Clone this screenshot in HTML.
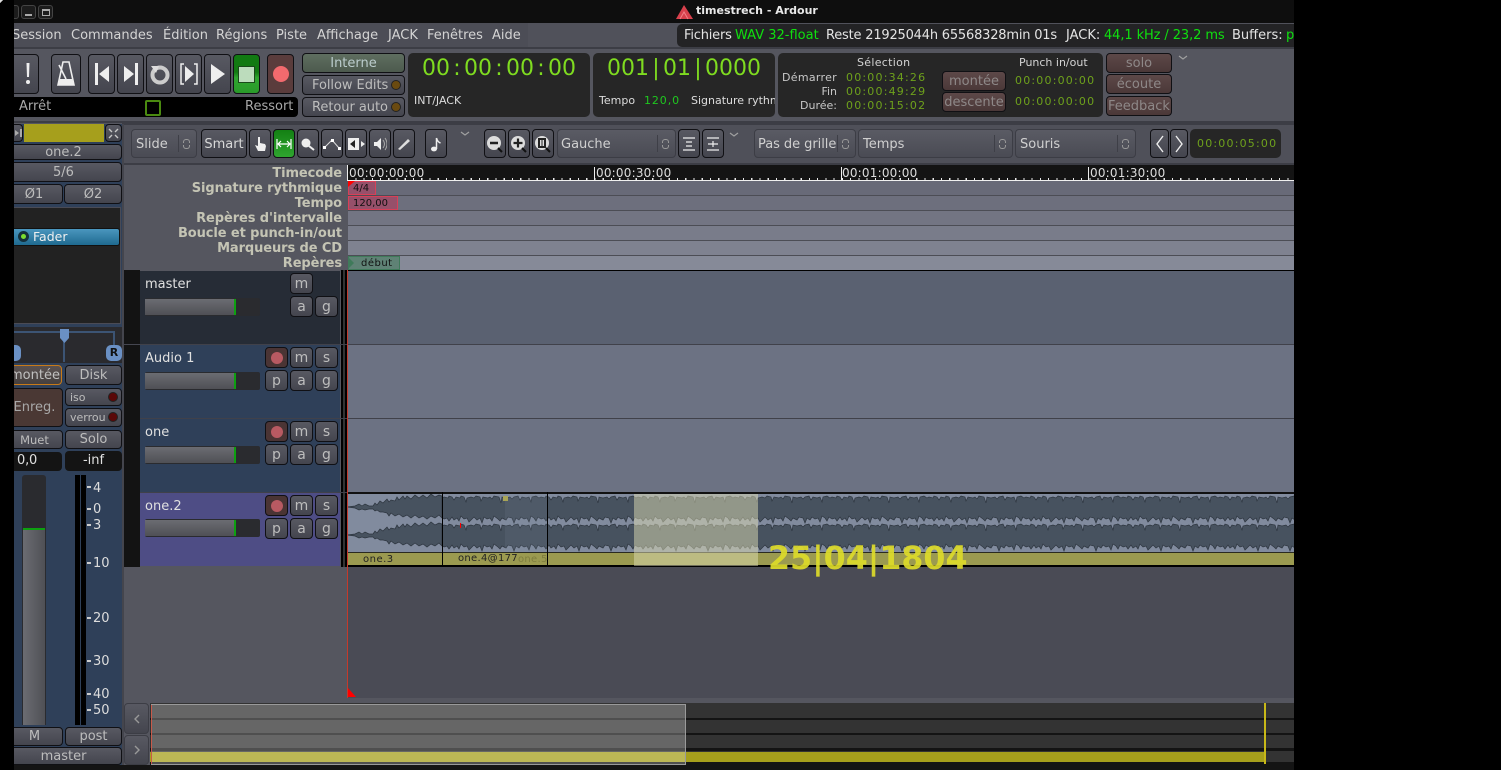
<!DOCTYPE html>
<html><head><meta charset="utf-8">
<style>
html,body{margin:0;padding:0;background:#000}
#r{position:relative;width:1501px;height:770px;overflow:hidden;background:#000;font-family:"DejaVu Sans","Liberation Sans",sans-serif;font-size:13px;color:#d4d4d4}
#p{position:absolute;left:14px;top:0;width:1280px;height:770px;overflow:hidden}
#w{position:absolute;left:-14px;top:0;width:1501px;height:770px}
.a{position:absolute;box-sizing:border-box}
.t{position:absolute;white-space:nowrap;line-height:16px}
.mn{line-height:19px;top:26px}
.b{position:absolute;box-sizing:border-box;border:1px solid #101014;border-radius:4px;background:linear-gradient(#585962,#44454e);display:flex;align-items:center;justify-content:center;white-space:nowrap;color:#bdbdbd;overflow:hidden}
.d{position:absolute;box-sizing:border-box;border:1px solid #3c3d45;border-radius:4px;background:linear-gradient(#5a5b64,#4a4b54);line-height:29px;padding-left:4px;white-space:nowrap;color:#d0d0d0;overflow:hidden}
.d:after{content:"";position:absolute;right:17px;top:5px;height:17px;border-left:1px solid #3e3f47}
.d i{position:absolute;right:6px;top:9px;width:5px;height:3px;border:1px solid #999;border-bottom:0;border-radius:3px 3px 0 0}
.d u{position:absolute;right:6px;top:15px;width:5px;height:3px;border:1px solid #999;border-top:0;border-radius:0 0 3px 3px}
.p{position:absolute;box-sizing:border-box;background:#262626;border-radius:5px}
.g{color:#6ea11c;font-size:11px;letter-spacing:1.2px}
.l{position:absolute;right:1159px;font-weight:bold;color:#c4c4b4;line-height:15px;white-space:nowrap;letter-spacing:-.1px;font-size:13px}
.tn{position:absolute;left:140px;width:200px;height:73px}
.tb{border-radius:4px;width:23px;height:21px;font-size:14px}
.fd{position:absolute;left:145px;width:115px;height:18px;background:#2a2b2f;border-radius:2px}
.fd b{position:absolute;left:0;top:1px;width:89px;height:16px;background:linear-gradient(#6b6c72,#4f5055)}
.fd s{position:absolute;left:89px;top:1px;width:2px;height:16px;background:#0da010}
.rec{background:#4a3434}
.rec:after{content:"";width:12px;height:12px;border-radius:50%;background:#b85a62}
.m{background:linear-gradient(#5d4848,#4b3838);color:#8e8888}
.c{position:absolute;display:flex;font-size:22px;line-height:28px;color:#7fdc20}
.c span{display:block;width:14px;text-align:center}
svg{display:block}
</style></head><body>
<div id="r">
<div class="a" style="left:0;top:0;width:3px;height:3px;background:#ddd;clip-path:polygon(0 0,100% 0,0 100%)"></div>
<div id="p"><div id="w">

<!-- title bar -->
<div class="a" style="left:0;top:0;width:1501px;height:23px;background:#0e0e0e"></div>
<div class="a" style="left:7px;top:5px;width:12px;height:14px;border:1px solid #444;border-radius:3px;background:#1c1c1c"></div>
<div class="a" style="left:21px;top:5px;width:15px;height:14px;border:1px solid #444;border-radius:3px;background:#1c1c1c"><div class="a" style="left:3px;top:8px;width:7px;height:2px;background:#aaa"></div></div>
<div class="a" style="left:38px;top:5px;width:15px;height:14px;border:1px solid #444;border-radius:3px;background:#1c1c1c"><div class="a" style="left:3px;top:3px;width:8px;height:7px;border:1px solid #aaa;border-top-width:2px"></div></div>
<svg class="a" style="left:675px;top:4px" width="18" height="16"><path d="M9 1 L18 15 L1 15Z" fill="#d8404c"/><path d="M5 15L9 8L13 15" fill="none" stroke="#f08088" stroke-width="1"/></svg>
<div class="t" style="left:696px;top:3px;font-weight:bold;font-size:11px;color:#e8e8e8">timestrech - Ardour</div>

<!-- menu -->
<div class="a" style="left:0;top:23px;width:1501px;height:24px;background:#4c4d56"></div>
<div class="a" style="left:528px;top:23px;width:770px;height:24px;background:#50515a"></div>
<div class="t mn" style="left:12px">Session</div>
<div class="t mn" style="left:71px">Commandes</div>
<div class="t mn" style="left:163px">Édition</div>
<div class="t mn" style="left:216px">Régions</div>
<div class="t mn" style="left:276px">Piste</div>
<div class="t mn" style="left:317px">Affichage</div>
<div class="t mn" style="left:388px">JACK</div>
<div class="t mn" style="left:427px">Fenêtres</div>
<div class="t mn" style="left:492px">Aide</div>
<div class="a" style="left:677px;top:24px;width:640px;height:23px;background:#232325;border-radius:5px 0 0 5px"></div>
<div class="t mn" style="left:684px;color:#e4e4e4;letter-spacing:-.2px">Fichiers</div>
<div class="t mn" style="left:735px;color:#0fe00f">WAV 32-float</div>
<div class="t mn" style="left:826px;color:#e4e4e4;letter-spacing:-.2px">Reste 21925044h 65568328min 01s</div>
<div class="t mn" style="left:1066px;color:#e4e4e4">JACK:</div>
<div class="t mn" style="left:1104px;color:#0fe00f;letter-spacing:-.1px">44,1 kHz / 23,2 ms</div>
<div class="t mn" style="left:1232px;color:#e4e4e4">Buffers:</div>
<div class="t mn" style="left:1286px;color:#0fe00f">p</div>

<!-- transport -->
<div class="a" style="left:0;top:47px;width:1501px;height:77px;background:#55565f;border-top:2px solid #3c3d45"></div>
<div class="a" style="left:0;top:121px;width:1501px;height:2px;background:#3c3d45"></div>
<div class="b" style="left:10px;top:54px;width:29px;height:40px"><svg width="12" height="26" style="margin-left:6px"><path d="M4.500 2h3l-.5 14H5Z" fill="#eee"/><circle cx="6" cy="21" r="2" fill="#eee"/></svg></div>
<div class="b" style="left:51px;top:54px;width:30px;height:40px"><svg width="24" height="30"><path d="M9 3h6l5 23H4Z M4 26h16" fill="none" stroke="#eee" stroke-width="1.6"/><path d="M6 20h12l2 6H4Z" fill="#eee"/><path d="M12 20L5 6" stroke="#eee" stroke-width="1.6"/></svg></div>
<div class="b" style="left:88px;top:54px;width:27px;height:40px"><svg width="16" height="24"><path d="M1 1h3v22H1Z" fill="#eee"/><path d="M15 4v16L5 12Z" fill="#eee"/></svg></div>
<div class="b" style="left:117px;top:54px;width:27px;height:40px"><svg width="16" height="24"><path d="M12 1h3v22h-3Z" fill="#eee"/><path d="M1 4v16l10-8Z" fill="#eee"/></svg></div>
<div class="b" style="left:146px;top:54px;width:27px;height:40px"><svg width="22" height="22"><circle cx="11" cy="12" r="7.5" fill="none" stroke="#ccc" stroke-width="4"/><path d="M2 3l8 0-3 7Z" fill="#ddd"/></svg></div>
<div class="b" style="left:175px;top:54px;width:27px;height:40px"><svg width="20" height="24"><path d="M5 2H2v20h3M15 2h3v20h-3" fill="none" stroke="#eee" stroke-width="1.5"/><path d="M6 4v16l9-8Z" fill="#eee"/></svg></div>
<div class="b" style="left:204px;top:54px;width:27px;height:40px"><svg width="16" height="24"><path d="M1 2v20l14-10Z" fill="#eee"/></svg></div>
<div class="b" style="left:233px;top:54px;width:27px;height:40px;background:linear-gradient(#127a12 0,#127a12 45%,#2fa52f 60%,#2a9a2a)"><div style="width:15px;height:15px;background:#bcdcbc;border:1px solid #1a4a1a"></div></div>
<div class="b" style="left:267px;top:54px;width:27px;height:40px;background:#5a3c3c"><div style="width:16px;height:16px;border-radius:50%;background:#f26a6e"></div></div>
<div class="b" style="left:302px;top:53px;width:103px;height:20px;background:linear-gradient(#5f6e60,#4d5a4e);color:#bcc">Interne</div>
<div class="b" style="left:302px;top:75px;width:103px;height:20px;justify-content:flex-start;padding-left:9px;letter-spacing:-.05px">Follow Edits<div class="a" style="left:88px;top:4px;width:10px;height:10px;border-radius:50%;background:#6a4a10;border:1px solid #222"></div></div>
<div class="b" style="left:302px;top:97px;width:103px;height:20px;justify-content:flex-start;padding-left:9px;letter-spacing:-.05px">Retour auto<div class="a" style="left:88px;top:4px;width:10px;height:10px;border-radius:50%;background:#6a4a10;border:1px solid #222"></div></div>
<div class="a" style="left:0;top:97px;width:298px;height:20px;background:#000;border-radius:0 4px 4px 0"></div>
<div class="t" style="left:19px;top:99px;color:#a8a8a8">Arrêt</div>
<div class="t" style="left:245px;top:99px;color:#a8a8a8">Ressort</div>
<div class="a" style="left:145px;top:100px;width:16px;height:16px;border:2px solid #4a8a10;border-radius:2px"></div>

<!-- clocks -->
<div class="p" style="left:408px;top:53px;width:182px;height:64px"></div>
<div class="c" style="left:422px;top:55px"><span>0</span><span>0</span><span>:</span><span>0</span><span>0</span><span>:</span><span>0</span><span>0</span><span>:</span><span>0</span><span>0</span></div>
<div class="t" style="left:414px;top:93px;font-size:11px;color:#dcdcdc">INT/JACK</div>
<div class="p" style="left:593px;top:53px;width:182px;height:64px"></div>
<div class="c" style="left:607px;top:55px"><span>0</span><span>0</span><span>1</span><span>|</span><span>0</span><span>1</span><span>|</span><span>0</span><span>0</span><span>0</span><span>0</span></div>
<div class="t" style="left:599px;top:93px;font-size:11px;color:#dcdcdc">Tempo</div>
<div class="t" style="left:644px;top:93px;font-size:11px;color:#1fc81f;letter-spacing:.9px">120,0</div>
<div class="a" style="left:691px;top:93px;width:84px;height:16px;overflow:hidden"><div class="t" style="left:0;top:0;font-size:11px;color:#dcdcdc">Signature rythmique</div></div>
<div class="p" style="left:778px;top:53px;width:325px;height:64px"></div>
<div class="t" style="left:857px;top:55px;font-size:11px;color:#d4d4d4;letter-spacing:.3px">Sélection</div>
<div class="t" style="left:1019px;top:55px;font-size:11px;color:#d4d4d4">Punch in/out</div>
<div class="t" style="right:664px;top:70px;font-size:11px;color:#c8c8c8;letter-spacing:.3px">Démarrer</div>
<div class="t" style="right:664px;top:84px;font-size:11px;color:#c8c8c8">Fin</div>
<div class="t" style="right:664px;top:98px;font-size:11px;color:#c8c8c8">Durée:</div>
<div class="t g" style="left:846px;top:70px">00:00:34:26</div>
<div class="t g" style="left:846px;top:84px">00:00:49:29</div>
<div class="t g" style="left:846px;top:98px">00:00:15:02</div>
<div class="t g" style="left:1015px;top:73px">00:00:00:00</div>
<div class="t g" style="left:1015px;top:94px">00:00:00:00</div>
<div class="b m" style="left:942px;top:71px;width:64px;height:20px">montée</div>
<div class="b m" style="left:942px;top:92px;width:64px;height:20px">descente</div>
<div class="b m" style="left:1106px;top:53px;width:66px;height:20px">solo</div>
<div class="b m" style="left:1106px;top:74px;width:66px;height:20px">écoute</div>
<div class="b m" style="left:1106px;top:96px;width:66px;height:20px">Feedback</div>
<svg class="a" style="left:1178px;top:55px" width="10" height="6"><path d="M1 1l4 3 4-3" fill="none" stroke="#a0a0a0" stroke-width="1.2"/></svg>

<!-- editor toolbar -->
<div class="a" style="left:122px;top:123px;width:1180px;height:42px;background:#4f5059;border:1px solid #3c3d45;border-width:2px 0 2px 2px"></div>
<div class="d" style="left:131px;top:129px;width:66px;height:29px">Slide<i></i><u></u></div>
<div class="b" style="left:201px;top:129px;width:46px;height:29px;color:#d8d8d8;padding-top:1px">Smart</div>
<div class="b" style="left:249px;top:129px;width:22px;height:29px"><svg width="14" height="16"><path d="M5 1h2v6l5 1 1 2-1 5H5L2 9l3 1Z" fill="#eee"/></svg></div>
<div class="b" style="left:273px;top:129px;width:22px;height:29px;background:linear-gradient(#138013,#2fa52f)"><svg width="16" height="12"><path d="M1 1v10M15 1v10M2 6h12M5 3L2 6l3 3M11 3l3 3-3 3" fill="none" stroke="#fff" stroke-width="1.2"/></svg></div>
<div class="b" style="left:297px;top:129px;width:22px;height:29px"><svg width="16" height="14"><circle cx="6" cy="6" r="4.500" fill="#eee"/><path d="M9 9l5 4" stroke="#eee" stroke-width="2"/></svg></div>
<div class="b" style="left:321px;top:129px;width:22px;height:29px"><svg width="18" height="12"><path d="M2 9L9 2l7 8" fill="none" stroke="#ddd" stroke-width="1"/><rect x="0" y="8" width="3" height="3" fill="#fff"/><rect x="8" y="1" width="3" height="3" fill="#fff"/><rect x="15" y="9" width="3" height="3" fill="#fff"/></svg></div>
<div class="b" style="left:345px;top:129px;width:22px;height:29px"><svg width="18" height="14"><path d="M1 1h11v12H1Z" fill="#eee"/><path d="M3 7l5-4v8Z" fill="#222"/><path d="M14 4l4 3-4 3Z" fill="#eee"/></svg></div>
<div class="b" style="left:369px;top:129px;width:22px;height:29px"><svg width="14" height="14"><path d="M1 5h3l4-4v12l-4-4H1Z" fill="#eee"/><path d="M10 3q3 4 0 8M12 1q4 6 0 12" fill="none" stroke="#aaa"/></svg></div>
<div class="b" style="left:393px;top:129px;width:22px;height:29px"><svg width="14" height="14"><path d="M1 12L11 2l2 2L3 13Z" fill="#ddd"/></svg></div>
<div class="b" style="left:425px;top:129px;width:22px;height:29px"><svg width="12" height="16"><ellipse cx="4" cy="13" rx="3" ry="2.400" fill="#eee"/><path d="M6.500 13V2q1 4 4 5" fill="none" stroke="#eee" stroke-width="1.500"/></svg></div>
<svg class="a" style="left:460px;top:131px" width="10" height="6"><path d="M1 1l4 3 4-3" fill="none" stroke="#a0a0a0" stroke-width="1.2"/></svg>
<div class="b" style="left:484px;top:129px;width:22px;height:29px"><svg width="18" height="18"><circle cx="8" cy="8" r="7" fill="#ddd"/><path d="M4 8h8" stroke="#222" stroke-width="2.500"/><path d="M12 13l4 4" stroke="#111" stroke-width="2"/></svg></div>
<div class="b" style="left:508px;top:129px;width:22px;height:29px"><svg width="18" height="18"><circle cx="8" cy="8" r="7" fill="#ddd"/><path d="M3.500 8h9M8 3.500v9" stroke="#222" stroke-width="2.200"/><path d="M12 13l4 4" stroke="#111" stroke-width="2"/></svg></div>
<div class="b" style="left:532px;top:129px;width:22px;height:29px"><svg width="18" height="18"><circle cx="8" cy="8" r="7" fill="#ddd"/><path d="M5 4h6v8H5Z" fill="none" stroke="#222" stroke-width="2"/><path d="M8 4v8" stroke="#222"/><path d="M12 13l4 4" stroke="#111" stroke-width="2"/></svg></div>
<div class="d" style="left:557px;top:129px;width:119px;height:29px;padding-left:3px">Gauche<i></i><u></u></div>
<div class="b" style="left:678px;top:129px;width:22px;height:29px"><svg width="14" height="14"><path d="M1 1h12M1 13h12M4 5h6M4 9h6" stroke="#eee" stroke-width="1.200"/></svg></div>
<div class="b" style="left:702px;top:129px;width:22px;height:29px"><svg width="14" height="14"><path d="M1 1h12M1 13h12M2 7h10M7 4v6" stroke="#eee" stroke-width="1.200"/></svg></div>
<svg class="a" style="left:729px;top:132px" width="10" height="6"><path d="M1 1l4 3 4-3" fill="none" stroke="#a0a0a0" stroke-width="1.2"/></svg>
<div class="d" style="left:754px;top:129px;width:102px;height:29px;padding-left:3px;letter-spacing:-.05px">Pas de grille<i></i><u></u></div>
<div class="d" style="left:858px;top:129px;width:155px;height:29px">Temps<i></i><u></u></div>
<div class="d" style="left:1015px;top:129px;width:121px;height:29px">Souris<i></i><u></u></div>
<div class="b" style="left:1150px;top:129px;width:19px;height:29px"><svg width="10" height="18"><path d="M8 1L2 9l6 8" fill="none" stroke="#eee" stroke-width="1.400"/></svg></div>
<div class="b" style="left:1170px;top:129px;width:18px;height:29px"><svg width="10" height="18"><path d="M2 1l6 8-6 8" fill="none" stroke="#eee" stroke-width="1.400"/></svg></div>
<div class="p" style="left:1190px;top:129px;width:91px;height:29px"></div>
<div class="t g" style="left:1197px;top:136px">00:00:05:00</div>

<!-- ruler column -->
<div class="a" style="left:124px;top:165px;width:224px;height:535px;background:#55565f"></div>
<div class="l" style="top:166px">Timecode</div>
<div class="l" style="top:181px">Signature rythmique</div>
<div class="l" style="top:196px">Tempo</div>
<div class="l" style="top:211px">Repères d'intervalle</div>
<div class="l" style="top:226px">Boucle et punch-in/out</div>
<div class="l" style="top:241px">Marqueurs de CD</div>
<div class="l" style="top:256px">Repères</div>

<!-- rulers -->
<div class="a" style="left:347px;top:165px;width:950px;height:16px;background:#141414"></div>
<div class="a" style="left:347px;top:178px;width:950px;height:2px;background:repeating-linear-gradient(90deg,#e8e8e8 0,#e8e8e8 1px,transparent 1px,transparent 8.25px)"></div>
<div class="a" style="left:347px;top:180px;width:950px;height:1px;background:#f0f0f0"></div>
<div class="a" style="left:347px;top:165px;width:1px;height:15px;background:#eee"></div>
<div class="a" style="left:594px;top:167px;width:1px;height:13px;background:#eee"></div>
<div class="a" style="left:841px;top:167px;width:1px;height:13px;background:#eee"></div>
<div class="a" style="left:1088px;top:167px;width:1px;height:13px;background:#eee"></div>
<div class="t" style="left:349px;top:165px;font-size:12px;color:#ddd;letter-spacing:.2px">00:00:00:00</div>
<div class="t" style="left:596px;top:165px;font-size:12px;color:#ddd;letter-spacing:.2px">00:00:30:00</div>
<div class="t" style="left:842px;top:165px;font-size:12px;color:#ddd;letter-spacing:.2px">00:01:00:00</div>
<div class="t" style="left:1090px;top:165px;font-size:12px;color:#ddd;letter-spacing:.2px">00:01:30:00</div>
<div class="a" style="left:348px;top:181px;width:950px;height:14px;background:#686a78"></div>
<div class="a" style="left:348px;top:195px;width:950px;height:1px;background:#4c4d55"></div>
<div class="a" style="left:348px;top:196px;width:950px;height:14px;background:#6d6f7d"></div>
<div class="a" style="left:348px;top:210px;width:950px;height:1px;background:#4c4d55"></div>
<div class="a" style="left:348px;top:211px;width:950px;height:14px;background:#737583"></div>
<div class="a" style="left:348px;top:225px;width:950px;height:1px;background:#4c4d55"></div>
<div class="a" style="left:348px;top:226px;width:950px;height:14px;background:#797c8a"></div>
<div class="a" style="left:348px;top:240px;width:950px;height:1px;background:#4c4d55"></div>
<div class="a" style="left:348px;top:241px;width:950px;height:14px;background:#7f8290"></div>
<div class="a" style="left:348px;top:255px;width:950px;height:1px;background:#4c4d55"></div>
<div class="a" style="left:348px;top:256px;width:950px;height:14px;background:#868a98"></div>
<div class="a" style="left:348px;top:181px;width:28px;height:14px;background:#96506a;border:1px solid #d84058"></div>
<div class="a" style="left:348px;top:181px;width:0;height:0;border-top:6px solid #f00;border-right:7px solid transparent"></div>
<div class="t" style="left:353px;top:181px;font-size:10px;color:#111">4/4</div>
<div class="a" style="left:348px;top:196px;width:50px;height:14px;background:#96506a;border:1px solid #d84058"></div>
<div class="t" style="left:353px;top:196px;font-size:10px;color:#111">120,00</div>
<div class="a" style="left:348px;top:256px;width:52px;height:14px;background:#5f8275;border:1px solid #3f7a5a"></div>
<div class="a" style="left:349px;top:258px;width:0;height:0;border-left:5px solid #3f7a5a;border-top:5px solid transparent;border-bottom:5px solid transparent"></div>
<div class="t" style="left:361px;top:256px;font-size:10px;color:#111;letter-spacing:.5px">début</div>

<!-- tracks -->
<div class="a" style="left:124px;top:270px;width:16px;height:297px;background:#131313"></div>
<div class="tn" style="top:271px;background:#262c36"></div>
<div class="tn" style="top:345px;background:#2f4059"></div>
<div class="tn" style="top:419px;background:#2f4059"></div>
<div class="tn" style="top:493px;background:#4e4d85"></div>
<div class="a" style="left:124px;top:344px;width:1180px;height:1px;background:#454650"></div>
<div class="a" style="left:341px;top:270px;width:2px;height:297px;background:#000"></div>
<div class="a" style="left:345px;top:270px;width:2px;height:297px;background:#000"></div>
<div class="a" style="left:343px;top:270px;width:2px;height:297px;background:#333"></div>
<div class="a" style="left:347px;top:271px;width:950px;height:73px;background:#5a6171"></div>
<div class="a" style="left:347px;top:345px;width:950px;height:73px;background:#6c7283"></div>
<div class="a" style="left:347px;top:419px;width:950px;height:73px;background:#6c7283"></div>
<div class="a" style="left:140px;top:344px;width:1160px;height:1px;background:#40414a"></div>
<div class="a" style="left:140px;top:418px;width:1160px;height:1px;background:#40414a"></div>
<div class="a" style="left:140px;top:492px;width:1160px;height:1px;background:#40414a"></div>

<div class="t" style="left:145px;top:276px;line-height:17px;color:#e0e0e0">master</div>
<div class="t" style="left:145px;top:350px;line-height:17px;color:#e0e0e0">Audio 1</div>
<div class="t" style="left:145px;top:424px;line-height:17px;color:#e0e0e0">one</div>
<div class="t" style="left:145px;top:498px;line-height:17px;color:#e0e0e0">one.2</div>

<div class="fd" style="top:298px"><b></b><s></s></div>
<div class="fd" style="top:372px"><b></b><s></s></div>
<div class="fd" style="top:446px"><b></b><s></s></div>
<div class="fd" style="top:519px"><b></b><s></s></div>

<div class="b tb" style="left:290px;top:273px">m</div>
<div class="b tb" style="left:290px;top:296px">a</div>
<div class="b tb" style="left:315px;top:296px">g</div>

<div class="b tb rec" style="left:265px;top:347px"></div><div class="b tb" style="left:290px;top:347px">m</div><div class="b tb" style="left:315px;top:347px">s</div>
<div class="b tb" style="left:265px;top:370px">p</div><div class="b tb" style="left:290px;top:370px">a</div><div class="b tb" style="left:315px;top:370px">g</div>

<div class="b tb rec" style="left:265px;top:421px"></div><div class="b tb" style="left:290px;top:421px">m</div><div class="b tb" style="left:315px;top:421px">s</div>
<div class="b tb" style="left:265px;top:444px">p</div><div class="b tb" style="left:290px;top:444px">a</div><div class="b tb" style="left:315px;top:444px">g</div>

<div class="b tb rec" style="left:265px;top:495px"></div><div class="b tb" style="left:290px;top:495px">m</div><div class="b tb" style="left:315px;top:495px">s</div>
<div class="b tb" style="left:265px;top:518px">p</div><div class="b tb" style="left:290px;top:518px">a</div><div class="b tb" style="left:315px;top:518px">g</div>

<!-- region -->
<svg class="a" style="left:347px;top:492px" width="950" height="76">
<defs>
<g id="c">
<path d="M0,3 4,4 5,2 8,3 10,6 12,3 16,4 17,2 20,3 22,8 23,4 27,3 30,4 32,2 36,3 37,7 39,3 44,4 46,3 48,5 50,2 55,3 57,9 58,3 62,4 66,3 68,5 70,3 74,2 76,6 78,3 82,4 85,3 87,8 88,3 92,2 95,4 97,3 97,25 94,23 92,27 90,24 87,22 85,28 83,24 80,25 77,23 75,26 72,24 70,29 68,24 64,23 62,26 58,24 56,27 54,25 50,22 48,27 46,24 43,25 40,23 38,29 36,24 33,26 30,23 28,25 25,28 23,24 20,25 17,22 15,27 13,24 10,26 8,23 5,27 3,24 0,25Z" fill="#47525f"/>
<path d="M0,3 4,4 5,2 8,3 10,6 12,3 16,4 17,2 20,3 22,8 23,4 27,3 30,4 32,2 36,3 37,7 39,3 44,4 46,3 48,5 50,2 55,3 57,9 58,3 62,4 66,3 68,5 70,3 74,2 76,6 78,3 82,4 85,3 87,8 88,3 92,2 95,4 97,3M97,25 94,23 92,27 90,24 87,22 85,28 83,24 80,25 77,23 75,26 72,24 70,29 68,24 64,23 62,26 58,24 56,27 54,25 50,22 48,27 46,24 43,25 40,23 38,29 36,24 33,26 30,23 28,25 25,28 23,24 20,25 17,22 15,27 13,24 10,26 8,23 5,27 3,24 0,25" fill="none" stroke="#2c343e" stroke-width=".7"/>
</g>
<pattern id="wv" x="0" y="2" width="97" height="58" patternUnits="userSpaceOnUse"><use href="#c"/><use href="#c" y="28"/></pattern>
<path id="e" d="M0,15 8,14 12,12 15,14 18,12 22,14 26,14 28,11 30,13 33,9 36,11 40,7 42,10 44,8 48,9 50,5 52,8 56,4 58,7 60,4 64,7 68,3 72,6 76,3 80,6 84,2 88,5 92,3 95,4 95,26 92,23 88,26 84,24 80,27 76,24 72,26 68,23 64,26 60,23 56,25 52,22 48,24 44,21 42,24 40,21 36,20 33,20 30,18 28,19 26,17 22,17 18,18 15,17 12,18 8,16 0,15Z" fill="#47525f" stroke="#2c343e" stroke-width=".7"/>
</defs>
<rect x="0" y="1" width="950" height="60" fill="#818b9e"/>
<use href="#e" y="0"/><use href="#e" y="28"/>
<rect x="95" y="2" width="860" height="58" fill="url(#wv)"/>
<rect x="158" y="2" width="42" height="58" fill="#7f8b9e" opacity=".15"/>
<rect x="0" y="60" width="950" height="13" fill="#9b9a50"/>
<rect x="0" y="0" width="950" height="2" fill="#111"/>
<rect x="0" y="60" width="950" height="1" fill="#2a2a20"/>
<rect x="0" y="73" width="950" height="2" fill="#000"/>
<rect x="95" y="0" width="1" height="75" fill="#000"/>
<rect x="200" y="0" width="1" height="75" fill="#000"/>
<rect x="156" y="4" width="5" height="5" fill="#a8a456"/>
<rect x="113" y="31" width="1" height="5" fill="#f00"/>
<rect x="287" y="2" width="124" height="72" fill="#dedcb4" opacity=".5"/>
</svg>
<div class="t" style="left:363px;top:552px;font-size:10px;color:#222;letter-spacing:.5px">one.3</div>
<div class="t" style="left:458px;top:551px;font-size:10px;color:#222;letter-spacing:.3px">one.4@177</div>
<div class="t" style="left:518px;top:552px;font-size:10px;color:#7f7e3e;letter-spacing:.3px">one.5</div>

<!-- empty canvas -->
<div class="a" style="left:348px;top:567px;width:950px;height:131px;background:#4a4b55"></div>
<div class="a" style="left:347px;top:270px;width:1px;height:428px;background:#c43a2c"></div>
<div class="a" style="left:348px;top:688px;width:0;height:0;border-bottom:9px solid #f00;border-right:8px solid transparent"></div>
<div class="t" style="left:768px;top:539px;font-size:31.7px;line-height:40px;font-weight:bold;color:#dedc2a;opacity:.92">25|04|1804</div>

<!-- summary -->
<div class="a" style="left:124px;top:698px;width:1180px;height:5px;background:#55565f"></div>
<div class="a" style="left:124px;top:702px;width:26px;height:63px;background:#55565f"></div>
<div class="b" style="left:124px;top:703px;width:25px;height:31px;border-color:#3c3d45"><svg width="8" height="10"><path d="M6 1L2 5l4 4" fill="none" stroke="#999" stroke-width="1.400"/></svg></div>
<div class="b" style="left:124px;top:735px;width:25px;height:30px;border-color:#3c3d45"><svg width="8" height="10"><path d="M2 1l4 4-4 4" fill="none" stroke="#999" stroke-width="1.400"/></svg></div>
<div class="a" style="left:150px;top:703px;width:1150px;height:62px;background:#333"></div>
<div class="a" style="left:150px;top:718px;width:1150px;height:2px;background:#141414"></div>
<div class="a" style="left:150px;top:733px;width:1150px;height:2px;background:#141414"></div>
<div class="a" style="left:150px;top:748px;width:1150px;height:3px;background:#141414"></div>
<div class="a" style="left:150px;top:752px;width:1114px;height:10px;background:#a69f1c"></div>
<div class="a" style="left:150px;top:762px;width:1150px;height:3px;background:#141414"></div>
<div class="a" style="left:151px;top:704px;width:535px;height:61px;background:rgba(255,255,255,.25);border:1px solid #9a9a9a"></div>
<div class="a" style="left:151px;top:705px;width:1px;height:59px;background:#c85a4a"></div>
<div class="a" style="left:1264px;top:703px;width:2px;height:61px;background:#c8b818"></div>
<div class="a" style="left:0;top:765px;width:1501px;height:5px;background:#141414"></div>

<!-- mixer strip -->
<div class="a" style="left:0;top:124px;width:123px;height:641px;background:#2f4059"></div>
<div class="a" style="left:122px;top:124px;width:2px;height:641px;background:#44454d"></div>
<div class="b" style="left:2px;top:124px;width:21px;height:18px"><svg width="8" height="8" style="margin-left:12px"><path d="M0 1l4 3-4 3ZM5 0h2v8H5Z" fill="#aaa"/></svg></div>
<div class="a" style="left:24px;top:124px;width:80px;height:18px;background:#a69f1c"></div>
<div class="b" style="left:105px;top:124px;width:17px;height:18px"><svg width="11" height="11"><path d="M1 1l3 3M10 1L7 4M1 10l3-3M10 10L7 7" stroke="#c8c8c8" stroke-width="1.400"/></svg></div>
<div class="b" style="left:5px;top:144px;width:117px;height:16px;padding-top:1px">one.2</div>
<div class="b" style="left:5px;top:162px;width:117px;height:20px">5/6</div>
<div class="b" style="left:5px;top:184px;width:58px;height:20px">Ø1</div>
<div class="b" style="left:64px;top:184px;width:58px;height:20px">Ø2</div>
<div class="a" style="left:0;top:207px;width:121px;height:117px;background:#222;border:1px solid #4a4b55"></div>
<div class="a" style="left:0;top:228px;width:120px;height:18px;background:linear-gradient(#4a96be,#1f6a90);border:1px solid #111;border-radius:3px"></div>
<div class="a" style="left:18px;top:231px;width:11px;height:11px;border-radius:50%;background:#14303c"></div>
<div class="a" style="left:21px;top:234px;width:5px;height:5px;border-radius:50%;background:#7cdc30"></div>
<div class="t" style="left:33px;top:229px;color:#f0f0f0;font-size:12.500px">Fader</div>
<div class="a" style="left:0;top:327px;width:122px;height:36px;background:#2a2a2e"></div>
<svg class="a" style="left:0;top:326px" width="123" height="36"><path d="M0 6h114v20M64 8v28" fill="none" stroke="#3c5474" stroke-width="2"/><path d="M60 3h9v9l-4.500 5-4.500-5Z" fill="#6a90c4"/></svg>
<div class="a" style="left:5px;top:345px;width:16px;height:16px;background:#6a90c4;border-radius:5px"></div>
<div class="a" style="left:106px;top:345px;width:16px;height:16px;background:#6a90c4;border-radius:5px;color:#111;font-weight:bold;font-size:11px;line-height:16px;text-align:center">R</div>
<div class="b" style="left:8px;top:365px;width:54px;height:20px;border-color:#c87a18;color:#c0c0c0;background:linear-gradient(#5a5150,#45403f)">montée</div>
<div class="b" style="left:65px;top:365px;width:57px;height:20px">Disk</div>
<div class="b" style="left:6px;top:388px;width:57px;height:39px;background:#4a3834;color:#a8a8a8">Enreg.</div>
<div class="b" style="left:65px;top:388px;width:57px;height:18px;font-size:11px;justify-content:flex-start;padding-left:4px">iso<div class="a" style="left:42px;top:3px;width:10px;height:10px;border-radius:50%;background:#5a0808;border:1px solid #222"></div></div>
<div class="b" style="left:65px;top:408px;width:57px;height:19px;font-size:11px;justify-content:flex-start;padding-left:4px">verrou<div class="a" style="left:42px;top:3px;width:10px;height:10px;border-radius:50%;background:#5a0808;border:1px solid #222"></div></div>
<div class="b" style="left:6px;top:430px;width:57px;height:19px;font-size:11.500px">Muet</div>
<div class="b" style="left:65px;top:430px;width:57px;height:19px">Solo</div>
<div class="a" style="left:2px;top:452px;width:60px;height:19px;background:#141414;border-radius:4px"></div>
<div class="t" style="left:17px;top:453px;color:#e0e0e0;letter-spacing:-.2px">0,0</div>
<div class="a" style="left:65px;top:451px;width:57px;height:20px;background:#141414;border-radius:4px;text-align:center;line-height:20px;color:#e0e0e0">-inf</div>
<div class="a" style="left:22px;top:475px;width:24px;height:250px;background:#2a2b2f;border-radius:3px 3px 0 0"></div>
<div class="a" style="left:23px;top:530px;width:22px;height:195px;background:linear-gradient(90deg,#6b6c72,#4f5055)"></div>
<div class="a" style="left:23px;top:528px;width:22px;height:2px;background:#0da010"></div>
<div class="a" style="left:75px;top:475px;width:5px;height:250px;background:#000"></div>
<div class="a" style="left:81px;top:475px;width:5px;height:250px;background:#000"></div>
<div class="a" style="left:87px;top:486px;width:4px;height:2px;background:#ccc"></div><div class="t" style="left:93px;top:481px;color:#ddd">4</div>
<div class="a" style="left:87px;top:508px;width:4px;height:2px;background:#ccc"></div><div class="t" style="left:93px;top:502px;color:#ddd">0</div>
<div class="a" style="left:87px;top:524px;width:4px;height:2px;background:#ccc"></div><div class="t" style="left:93px;top:518px;color:#ddd">3</div>
<div class="a" style="left:87px;top:562px;width:4px;height:2px;background:#ccc"></div><div class="t" style="left:93px;top:556px;color:#ddd">10</div>
<div class="a" style="left:87px;top:617px;width:4px;height:2px;background:#ccc"></div><div class="t" style="left:93px;top:611px;color:#ddd">20</div>
<div class="a" style="left:87px;top:660px;width:4px;height:2px;background:#ccc"></div><div class="t" style="left:93px;top:654px;color:#ddd">30</div>
<div class="a" style="left:87px;top:693px;width:4px;height:2px;background:#ccc"></div><div class="t" style="left:93px;top:687px;color:#ddd">40</div>
<div class="a" style="left:87px;top:709px;width:4px;height:2px;background:#ccc"></div><div class="t" style="left:93px;top:703px;color:#ddd">50</div>
<div class="b" style="left:6px;top:727px;width:57px;height:19px">M</div>
<div class="b" style="left:65px;top:727px;width:57px;height:19px">post</div>
<div class="b" style="left:5px;top:747px;width:117px;height:18px">master</div>

</div></div>
<div class="a" style="left:1294px;top:0;width:207px;height:770px;background:#000"></div>
<div class="a" style="left:0;top:0;width:3px;height:3px;background:#ddd;clip-path:polygon(0 0,100% 0,0 100%)"></div>
</div>
</body></html>
